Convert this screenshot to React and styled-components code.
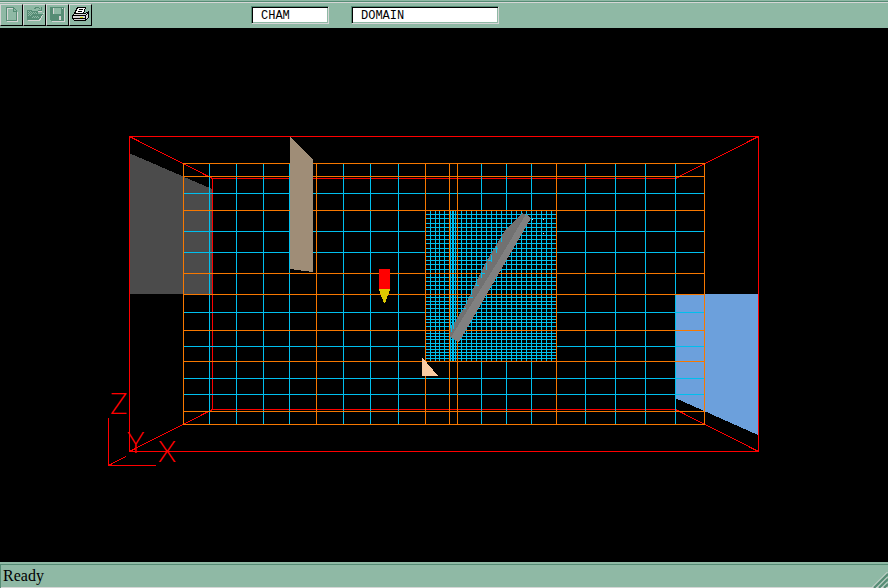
import styled, { createGlobalStyle } from "styled-components";

const green = "#8fb9a5";
const darkGreen = "#568c75";
const light = "#d6d6d6";
const red = "#ff0000";
const orange = "#f77800";
const cyan = "#00bfee";

// grid line positions in the drawing
const columns = [209, 236, 263, 289, 343, 370, 398, 481, 506, 531, 585, 615, 645, 675];
const rows = [193, 231, 252, 312, 346, 378, 394];
const regionColumns = [183, 316, 425, 449, 457, 556, 704];
const regionRows = [163, 176, 210, 273, 294, 330, 361, 411, 424];

// the finer mesh round the plate
const fineColumns = [
  430, 435, 439, 444, 450, 452, 453, 455, 461, 466, 471, 476, 481, 486, 491,
  496, 501, 506, 511, 516, 521, 526, 531, 536, 541, 546, 551,
];
const fineRows = [
  214, 218, 223, 227, 231, 235, 239, 243, 248, 252, 256, 260, 264, 269, 277,
  281, 285, 289, 297, 301, 304, 308, 312, 316, 319, 322, 326, 333, 336, 339,
  343, 346, 349, 352, 355, 358,
];

// both wind clockwise, so crossings stay filled
const vertical = (list, top, bottom) =>
  list.map((x) => `M${x} ${top}h1V${bottom}h-1z`).join("");
const horizontal = (list, left, right) =>
  list.map((y) => `M${left} ${y}H${right}v1H${left}z`).join("");

function App() {
  return (
    <Window>
      <GlobalStyle />
      <Toolbar>
        <Buttons>
          <ToolButton aria-label="New" disabled>
            <NewIcon />
          </ToolButton>
          <ToolButton aria-label="Open" disabled>
            <OpenIcon />
          </ToolButton>
          <ToolButton aria-label="Save" disabled>
            <SaveIcon />
          </ToolButton>
          <ToolButton aria-label="Print">
            <PrintIcon />
          </ToolButton>
        </Buttons>
        <Fields>
          <Field aria-label="Object name" defaultValue="CHAM" $width="78px" />
          <Field aria-label="Object type" defaultValue="DOMAIN" $width="148px" />
        </Fields>
      </Toolbar>
      <View>
        <Scene />
      </View>
      <StatusBar>
        <p>Ready</p>
        <Grip />
      </StatusBar>
    </Window>
  );
}

function Scene() {
  return (
    <Drawing viewBox="0 28 888 534" shapeRendering="crispEdges">
      {/* outlet on the left, inlet on the right */}
      <path fill="#4b4b4b" d="M129 153L212 189V294H129z" />
      <path fill="#6ca0dc" d="M675 294H758V435L675 398z" />

      {/* domain box */}
      <g fill="none" stroke={red}>
        <path d="M129.500 136.500H758.500V451.500H129.500z" />
        <path d="M212.500 178.500H675.500V409.500H212.500z" />
        <path d="M129.500 136.500L212.500 178.500M758.500 136.500L675.500 178.500M129.500 451.500L212.500 409.500M758.500 451.500L675.500 409.500" />
      </g>

      {/* mesh */}
      <path fill={cyan} d={vertical(columns, 163, 424) + horizontal(rows, 183, 704)} />
      <path fill={cyan} d={vertical(fineColumns, 210, 361) + horizontal(fineRows, 425, 556)} />
      <path fill={orange} d={vertical(regionColumns, 163, 425) + horizontal(regionRows, 183, 705)} />

      {/* plate */}
      <path fill="#717171" d="M522 213L531 218L459 342L450 337V329L463 309L486 262L504 232z" />
      <path fill="#808080" d="M526 214L531 218L459 342L451 337L500 258z" />
      <path
        fill={cyan}
        d="M451 325h1v7h-1zM453 321h1v8h-1zM455 316h1v6h-1zM461 307h1v5h-1zM466 298h1v6h-1zM471 289h1v6h-1zM476 280h1v6h-1zM481 272h1v6h-1zM486 263h1v7h-1zM491 255h1v7h-1zM496 246h1v7h-1zM501 237h1v5h-1zM462 308h4v1h-4zM469 297h4v1h-4zM475 285h4v1h-4zM481 273h4v1h-4zM488 260h4v1h-4zM494 248h4v1h-4z"
      />
      <path fill="#e0e0e0" d="M532 219h1v1h-1zM543 219h1v1h-1zM543 233h1v1h-1z" />

      <path fill="#9f8d77" d="M290 137L313 160V272L290 269z" />
      <path fill={red} d="M379 269h11v20h-11z" />
      <path fill="#ddc800" d="M379 289h11v1l-5 13h-1l-5 -13z" />
      <path fill="#f9cba3" d="M422 357L438 376H422z" />

      {/* axes */}
      <path fill="none" stroke={red} d="M108.500 418V465.500H156M108.500 465.500L126 456.500" />
      <AxisLabel x="110" y="414">Z</AxisLabel>
      <AxisLabel x="127" y="453">Y</AxisLabel>
      <AxisLabel x="158" y="462">X</AxisLabel>
    </Drawing>
  );
}

function NewIcon() {
  return (
    <Icon viewBox="0 0 20 18">
      <path fill="none" stroke={light} d="M6.500 3.500V16.500H16.500V7.500L12.500 3.500z" />
      <path fill={green} stroke={darkGreen} d="M5.500 2.500H12.500L15.500 5.500V15.500H5.500z" />
      <path fill="none" stroke={light} d="M6.500 15V3.500H12" />
      <path fill="none" stroke={darkGreen} d="M12.500 2.500V6.500H15.500" />
    </Icon>
  );
}

function OpenIcon() {
  return (
    <Icon viewBox="0 0 20 18">
      <path fill="none" stroke={light} d="M4 15.500H15.500L19.500 8.500M17.500 3v3h-4M4.500 15V6" />
      <path fill={darkGreen} d="M3 5h4l1 1h6v3h5l-4 6H3z" />
      <path fill="none" stroke={darkGreen} d="M10.500 4L12 2.500H14.500L16.500 4.500M17.500 2V5.500H14" />
      <path
        stroke={green}
        strokeDasharray="1 1"
        d="M4 6.500H7M5 7.500H13M4 8.500H13M5 9.500H9M4 10.500H8M9 11.500H15M8 12.500H15"
      />
    </Icon>
  );
}

function SaveIcon() {
  return (
    <Icon viewBox="0 0 20 18">
      <path fill={light} d="M4 3h14v14H5l-1 -1z" />
      <path fill={darkGreen} d="M3 2h14v14H4l-1 -1z" />
      <path fill={green} d="M6 3h8v6H6z" />
      <path fill={light} d="M15 3h1v1h-1zM12 11h2v4h-2zM6 3h1v6h-1z" />
    </Icon>
  );
}

function PrintIcon() {
  return (
    <Icon viewBox="0 0 20 18">
      <path fill="#fff" stroke="#000" d="M7.500 2.500H15.500L13.500 8.500H4.500z" />
      <path stroke="#000" d="M9 4.500H13M8 6.500H12" />
      <path fill="#d6d6d6" stroke="#000" d="M4.500 8.500H15.500L18.500 6.500V12.500L15.500 15.500H4.500L2.500 13.500V10.500z" />
      <path stroke="#000" d="M3 10.500H15.500V15M15.500 10.500L18 8M3 13.500H15" />
      <path fill="#d8d800" d="M10 12h3v1h-3z" />
    </Icon>
  );
}

function Grip() {
  return (
    <GripIcon viewBox="0 0 18 18">
      <path stroke={light} d="M2 17.500L17.500 2M7 17.500L17.500 7M12 17.500L17.500 12" />
      <path stroke={darkGreen} strokeWidth="2" d="M4 18L18 4M9 18L18 9M14 18L18 14" />
    </GripIcon>
  );
}

const GlobalStyle = createGlobalStyle`
  * {
    box-sizing: border-box;
  }

  body {
    margin: 0;
    background: #000;
  }
`;

const Window = styled.div`
  display: flex;
  flex-direction: column;
  min-height: 100vh;
`;

const Toolbar = styled.header`
  display: flex;
  align-items: center;
  gap: 159px;
  height: 28px;
  padding-top: 2px;
  background: ${green};
  box-shadow: inset 0 1px ${green}, inset 0 2px ${darkGreen},
    inset 0 3px ${light};
`;

const Buttons = styled.div`
  display: flex;
`;

const ToolButton = styled.button`
  display: flex;
  align-items: flex-start;
  width: 23px;
  height: 22px;
  padding: 0;
  border: 1px solid;
  border-color: ${light} #000 #000 ${light};
  background: ${green};
`;

const Icon = styled.svg`
  width: 20px;
  height: 18px;
  flex: none;
  fill: none;
  shape-rendering: crispEdges;
`;

const Fields = styled.div`
  display: flex;
  gap: 22px;
`;

const Field = styled.input`
  width: ${(props) => props.$width};
  height: 18px;
  padding: 2px 8px 0 9px;
  border: 1px solid;
  border-color: ${darkGreen} ${light} ${light} ${darkGreen};
  border-radius: 0;
  outline: none;
  background: #fff;
  box-shadow: inset 1px 1px #000, inset -1px -1px ${green};
  color: #000;
  font-family: "Liberation Mono", monospace;
  font-size: 12px;
`;

const View = styled.main`
  display: flex;
  flex: 1;
  align-items: center;
  background: #000;
`;

const Drawing = styled.svg`
  display: block;
  width: 100%;
`;

const AxisLabel = styled.text`
  fill: ${red};
  font-family: Lato, sans-serif;
  font-size: 29px;
  font-weight: 300;
`;

const StatusBar = styled.footer`
  display: flex;
  align-items: center;
  justify-content: space-between;
  height: 26px;
  padding: 2px 0 0 3px;
  background: ${green};
  box-shadow: inset 0 2px ${green}, inset 1px 3px ${darkGreen},
    inset 0 -1px ${light};

  p {
    margin: 0;
    font-family: "Liberation Serif", serif;
    font-size: 16px;
  }
`;

const GripIcon = styled.svg`
  align-self: flex-end;
  width: 18px;
  height: 18px;
`;

export default App;
